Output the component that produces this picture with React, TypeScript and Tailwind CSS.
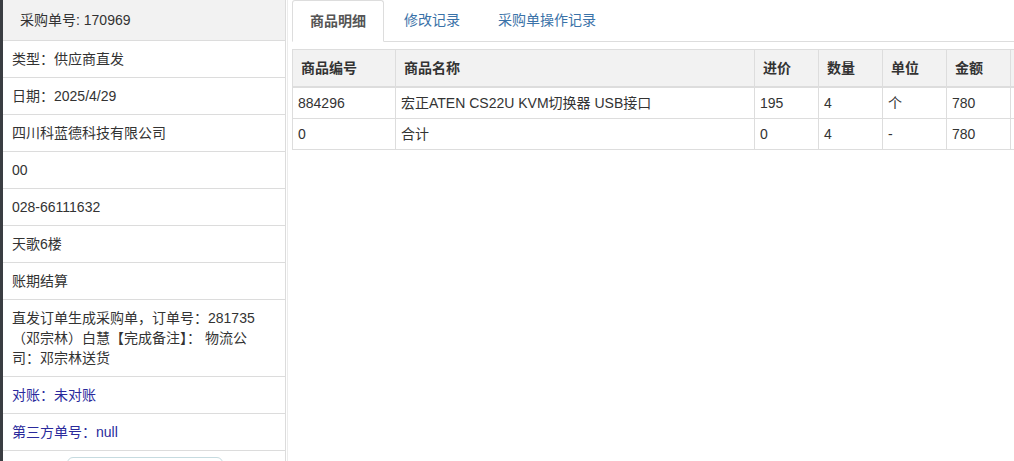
const infoRows: { lines: string[]; blue?: boolean }[] = [
  { lines: ['类型：供应商直发'] },
  { lines: ['日期：2025/4/29'] },
  { lines: ['四川科蓝德科技有限公司'] },
  { lines: ['00'] },
  { lines: ['028-66111632'] },
  { lines: ['天歌6楼'] },
  { lines: ['账期结算'] },
  { lines: ['直发订单生成采购单，订单号：281735', '（邓宗林）白慧【完成备注】： 物流公', '司：邓宗林送货'] },
  { lines: ['对账：未对账'], blue: true },
  { lines: ['第三方单号：null'], blue: true },
]

const columns = [
  { title: '商品编号', w: 'w-[103px]' },
  { title: '商品名称', w: 'w-[359px]' },
  { title: '进价', w: 'w-[64px]' },
  { title: '数量', w: 'w-[64px]' },
  { title: '单位', w: 'w-[64px]' },
  { title: '金额', w: 'w-[64px]' },
  { title: '', w: 'w-[80px]' },
]

const rows = [
  ['884296', '宏正ATEN CS22U KVM切换器 USB接口', '195', '4', '个', '780', ''],
  ['0', '合计', '0', '4', '-', '780', ''],
]

function Sidebar() {
  return (
    <div className="w-[283px] shrink-0 border-r border-[#dcdcdc] bg-white">
      <div className="h-[41px] flex items-center pl-[17px] bg-[#f2f2f2] border-b border-[#dcdcdc]">
        采购单号: 170969
      </div>
      {infoRows.map((r, i) => (
        <div
          key={i}
          className={`px-[9px] py-[8px] border-b border-[#dcdcdc] leading-[20px] whitespace-nowrap ${r.blue ? 'text-[#2a2a9c]' : ''}`}
        >
          {r.lines.map((l, j) => (
            <div key={j}>{l}</div>
          ))}
        </div>
      ))}
      <div className="pt-[6px] pl-[64px]">
        <div className="w-[156px] h-[20px] rounded-[6px] border border-[#c6dbe0]" />
      </div>
    </div>
  )
}

function Tabs() {
  return (
    <div className="flex border-b border-[#dddddd] h-[42px]">
      <div className="px-[17px] h-[42px] -mb-px flex items-center border border-[#dddddd] border-b-white bg-white rounded-t-[3px] font-bold text-[#555555]">
        商品明细
      </div>
      <div className="ml-[2px] px-[18px] flex items-center text-[#3a72a8]">修改记录</div>
      <div className="ml-[2px] px-[18px] flex items-center text-[#3a72a8]">采购单操作记录</div>
    </div>
  )
}

function GoodsTable() {
  return (
    <div className="mt-[7px] overflow-hidden">
      <table className="border-collapse table-fixed w-[798px]">
        <colgroup>
          {columns.map((c, i) => (
            <col key={i} className={c.w} />
          ))}
        </colgroup>
        <thead>
          <tr className="bg-[#f2f2f2]">
            {columns.map((c, i) => (
              <th
                key={i}
                className="text-left font-bold px-[8px] py-[8px] leading-[20px] border border-[#dddddd] border-b-2"
              >
                {c.title}
              </th>
            ))}
          </tr>
        </thead>
        <tbody>
          {rows.map((r, i) => (
            <tr key={i}>
              {r.map((v, j) => (
                <td key={j} className="px-[5px] py-[5px] leading-[20px] border border-[#dddddd]">
                  {v}
                </td>
              ))}
            </tr>
          ))}
        </tbody>
      </table>
    </div>
  )
}

export default function App() {
  return (
    <div
      className="w-[1014px] h-[461px] overflow-hidden flex bg-white text-[14px] text-[#333333]"
      style={{ fontFamily: '"Liberation Sans", "Noto Sans CJK SC", sans-serif' }}
    >
      <div className="w-[3px] shrink-0 bg-[#3a3d42]" />
      <Sidebar />
      <div className="flex-1 min-w-0 pl-[4px] border-l border-[#ececec] ml-px">
        <Tabs />
        <GoodsTable />
      </div>
    </div>
  )
}
